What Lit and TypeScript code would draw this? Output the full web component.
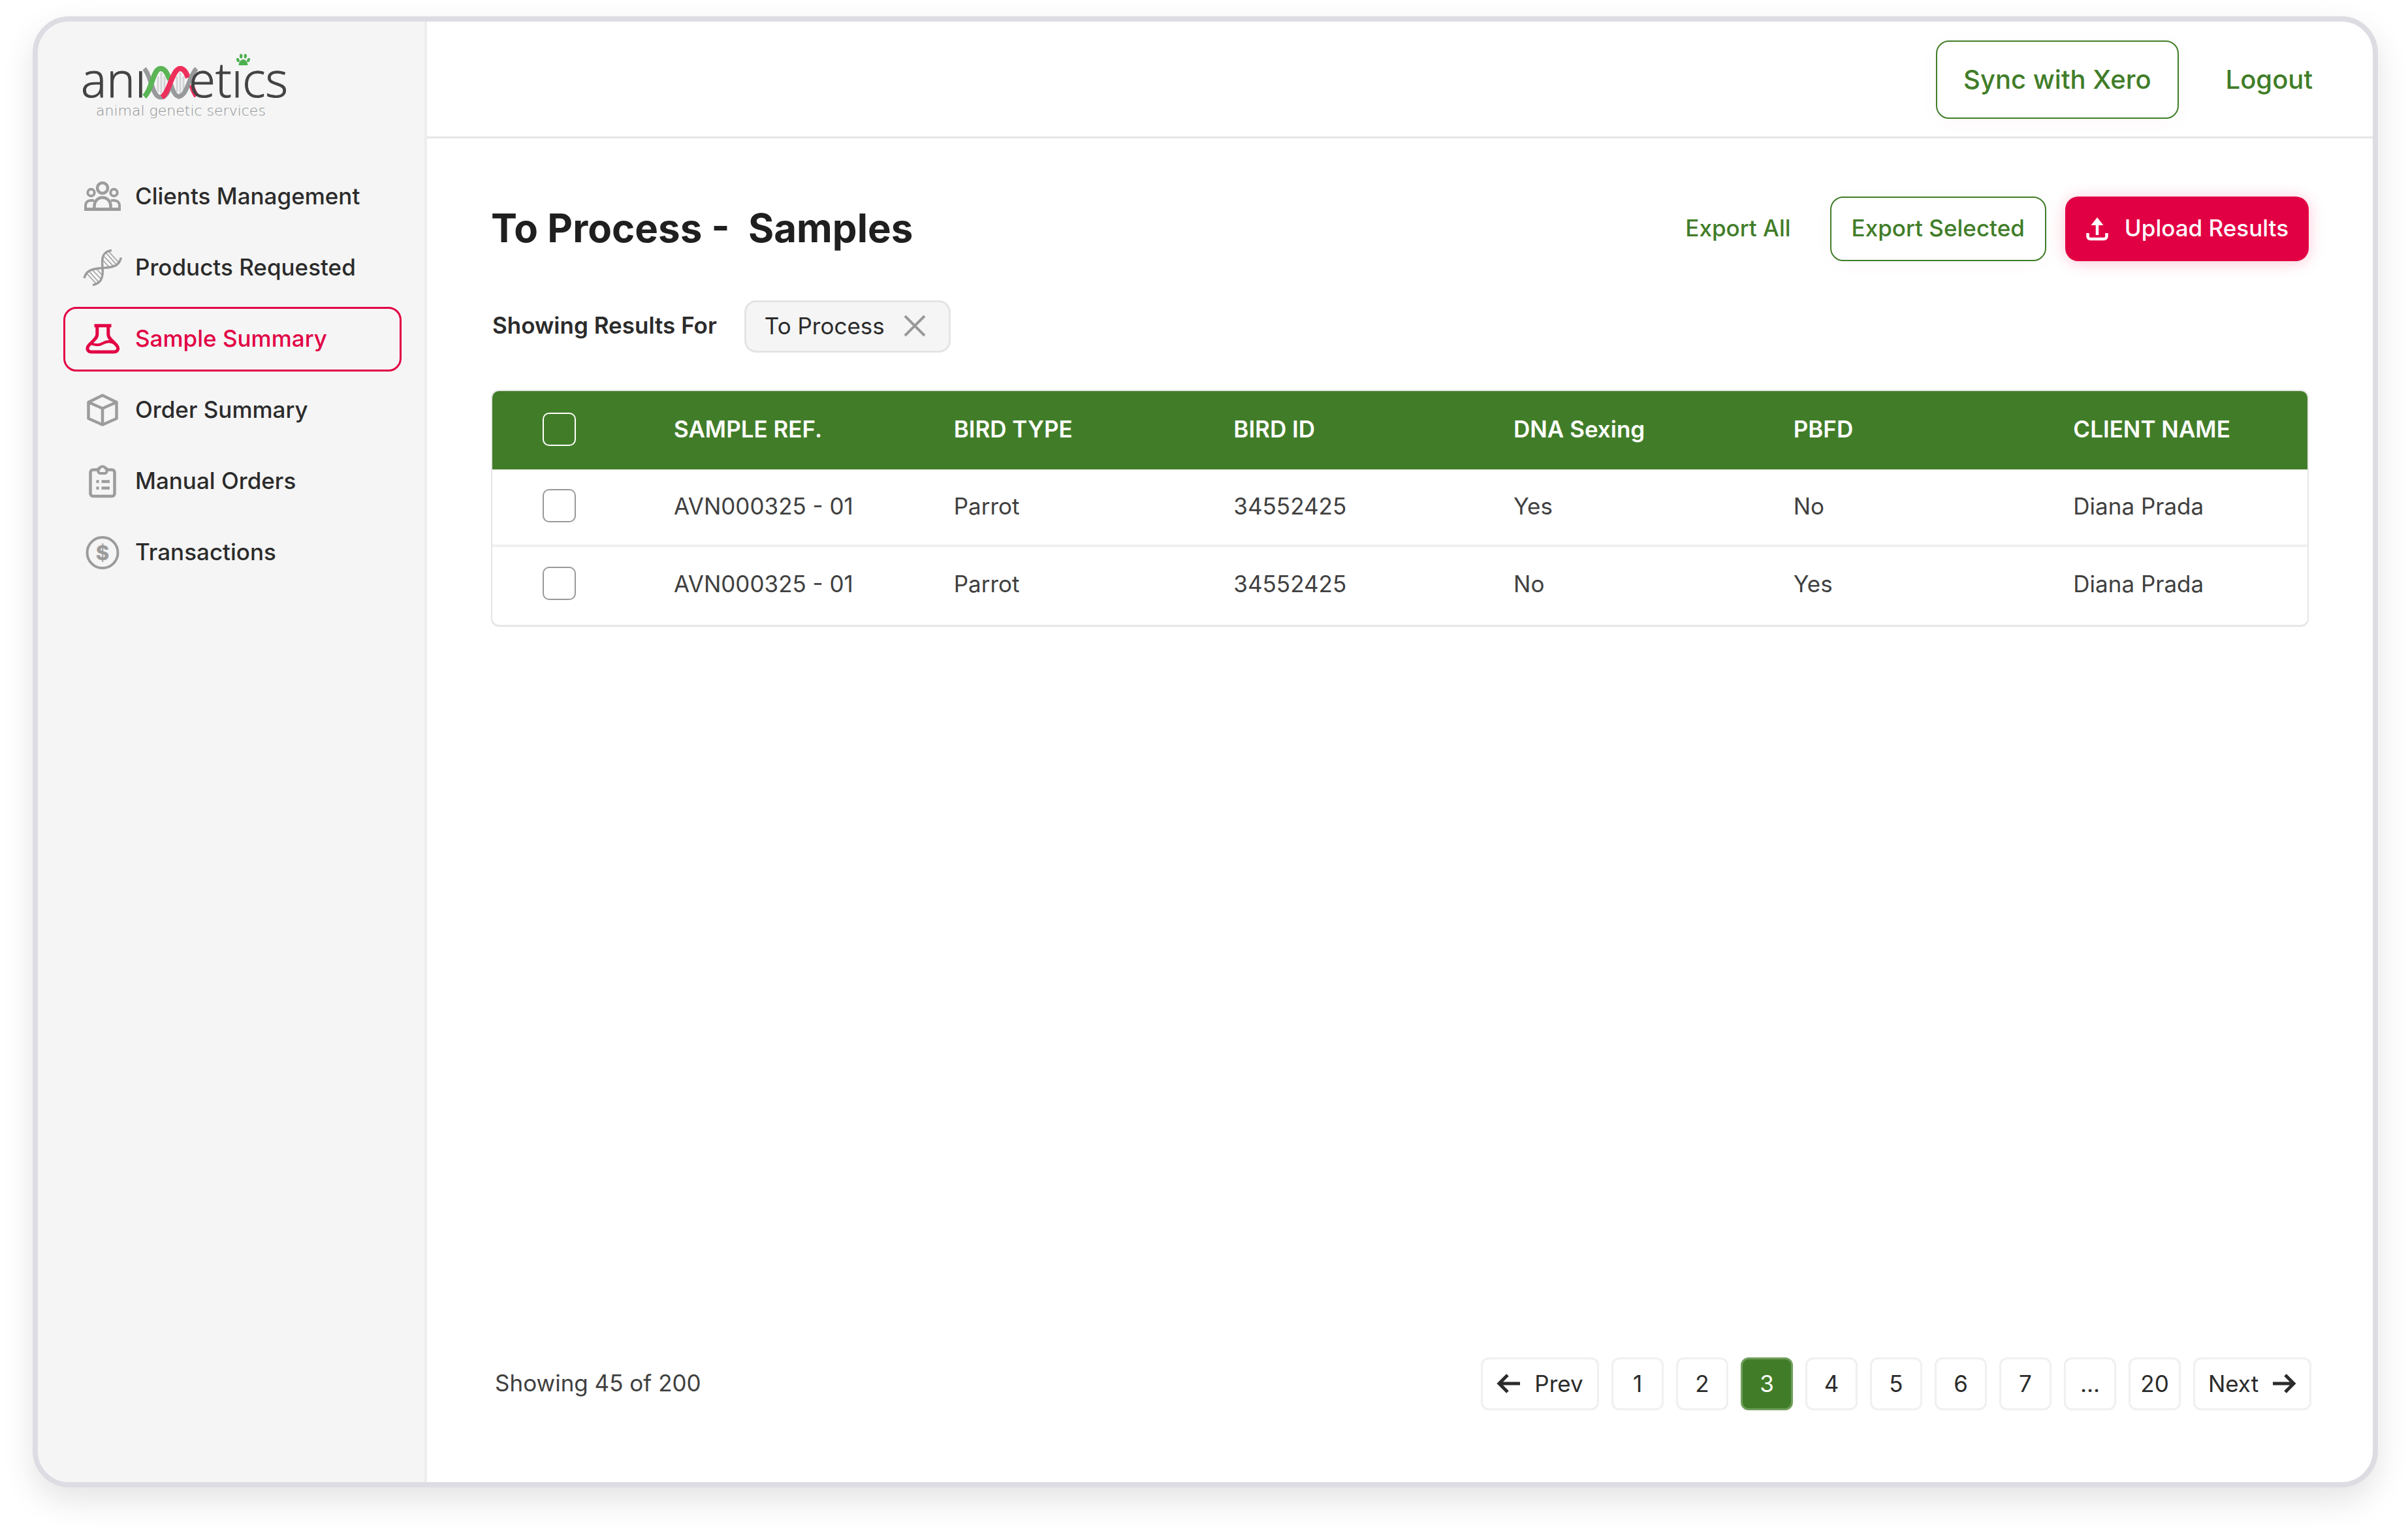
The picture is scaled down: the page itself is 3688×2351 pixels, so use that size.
import { LitElement, html, css, svg } from "lit";
import { customElement, property, state } from "lit/decorators.js";
import { classMap } from "lit/directives/class-map.js";

const icons: Record<string, unknown> = {
  people: svg`<g fill="none" stroke="currentColor" stroke-width="4.500">
    <circle cx="30" cy="17" r="8"/>
    <circle cx="12.5" cy="24" r="5.2" stroke-width="4"/>
    <circle cx="47.5" cy="24" r="5.2" stroke-width="4"/>
    <path d="M17.5 49V44a12.5 12.5 0 0 1 25 0v5"/>
    <path d="M4 49v-5c0-5 3-8 8-8h5M56 49v-5c0-5-3-8-8-8h-5" stroke-width="4"/>
    <path d="M2 49.500h56" stroke-width="5"/></g>`,
  dna: svg`<g fill="none" stroke="currentColor" stroke-width="3.500">
    <path d="M44 3.500C30 5 28.500 15 30 30C31.500 45 28 54.500 15 56.500"/>
    <path d="M58.500 14.500C55 28 46 29.500 30 30.500C14 31.500 5 34 2 46"/>
    <path stroke-width="1.500" d="M40 6L55 22M36 8L51 25M32.500 13L47 28M31 19L40 29M20 54L5 38M24 52L9 35M27.500 47L13 32M29 41L20 31"/></g>`,
  flask: svg`<g fill="none" stroke="currentColor" stroke-width="5" stroke-linejoin="round">
    <path d="M17.500 9.800h26" stroke-width="5"/>
    <path d="M21.800 11v12c0 4-2 6-5 9l-7 7c-5 5-3 11 3 11h35c6 0 8-6 3-11l-7-7c-3-3-5-5-5-9V11"/>
    <path d="M12 37c7 3 13 3 18 0s11-4 17-1" stroke-width="4"/></g>`,
  cube: svg`<path d="M30 7.500L51.500 18v25L30 52.500L8.500 43V18zM8.500 18L30 27.500L51.500 18M30 27.500v25" fill="none" stroke="currentColor" stroke-width="4.500" stroke-linejoin="round"/>`,
  clipboard: svg`<g fill="none" stroke="currentColor" stroke-width="4.500">
    <path d="M22 12.500h-6.500a4 4 0 0 0-4 4V49a4 4 0 0 0 4 4h29a4 4 0 0 0 4-4V16.500a4 4 0 0 0-4-4H38"/>
    <path d="M23.500 10.500h2c1-4 8-4 9 0h2V15a3 3 0 0 1-3 3h-7a3 3 0 0 1-3-3z" stroke-width="4" stroke-linejoin="round"/>
    <path d="M20.500 30.500h4M28.500 30.500h12.500M20.500 40.500h4M28.500 40.500h12.500"/></g>`,
  coin: svg`<circle cx="30" cy="30.500" r="23.500" fill="none" stroke="currentColor" stroke-width="4"/>
    <text x="30" y="41.500" text-anchor="middle" font-family="Inter, sans-serif" font-size="31" font-weight="800" fill="currentColor">$</text>`,
  upload: svg`<g fill="none" stroke="currentColor" stroke-width="4.500">
    <path d="M18 27V7" /><path d="M3.500 24v5a4 4 0 0 0 4 4h21a4 4 0 0 0 4-4v-5"/></g>
    <path d="M18 0l9.500 12h-19z" fill="currentColor"/>`,
  left: svg`<path d="M36 18H4M17 5L4 18l13 13" fill="none" stroke="currentColor" stroke-width="5"/>`,
  right: svg`<path d="M0 18h32M19 5l13 13-13 13" fill="none" stroke="currentColor" stroke-width="5"/>`,
  close: svg`<path d="M3 3l30 30M33 3L3 33" fill="none" stroke="currentColor" stroke-width="4"/>`,
};

@customElement("ui-icon")
class UiIcon extends LitElement {
  @property() name = "";
  @property({ type: Number }) box = 36;
  static styles = css`
    :host { display: block; flex: none; }
    svg { display: block; width: 100%; height: 100%; overflow: visible; }
  `;
  render() {
    return html`<svg viewBox="0 0 ${this.box} ${this.box}" aria-hidden="true">${icons[this.name]}</svg>`;
  }
}

@customElement("brand-logo")
class BrandLogo extends LitElement {
  static styles = css`
    :host { display: block; }
    svg { display: block; width: 324px; height: 112px; overflow: visible; }
    .word { font: 300 74px "Open Sans", sans-serif; fill: #434345; stroke: #434345; stroke-width: 1px; }
    .tag { font: 200 22px "DejaVu Sans", sans-serif; fill: #8d9091; }
  `;
  render() {
    return html`<svg viewBox="0 0 324 112" role="img" aria-label="animetics animal genetic services">
      <text class="word" x="4" y="74">anı</text>
      <g fill="none">
        <path d="M122 42v24M127 36v36M132 42v24M151 42v24M156 36v36M161 42v24M108 34v12M177 48v10" stroke="#d2d4d5" stroke-width="3"/>
        <path d="M101 30c11 12 12 44 25 44s14-20 16-26" stroke="#97999b" stroke-width="7"/>
        <path d="M101 73c12-10 13-43 25-43c7 0 10 8 14 17" stroke="#5bb556" stroke-width="8"/>
        <path d="M140 48c4 14 7 25 15 25" stroke="#97999b" stroke-width="7"/>
        <path d="M128 74c12-8 16-44 28-44c6 0 9 6 12 14M173 55c3 8 4 12 8 17" stroke="#ee2e5b" stroke-width="8"/>
        <path d="M153 73c14 0 16-32 28-43" stroke="#97999b" stroke-width="7"/>
      </g>
      <text class="word" x="321" y="74" text-anchor="end">etıcs</text>
      <g fill="#4cb04f">
        <ellipse cx="244.500" cy="17" rx="2.200" ry="3.400" transform="rotate(-25 244.500 17)"/>
        <ellipse cx="260.500" cy="17" rx="2.200" ry="3.400" transform="rotate(25 260.500 17)"/>
        <ellipse cx="249.200" cy="11" rx="2.200" ry="3.400"/><ellipse cx="255.800" cy="11" rx="2.200" ry="3.400"/>
        <path d="M252.500 16c4 0 7 5 7 9h-14c0-4 3-9 7-9z"/>
      </g>
      <text class="tag" x="27" y="102">animal genetic services</text>
    </svg>`;
  }
}

const NAV = [
  ["people", "Clients Management"],
  ["dna", "Products Requested"],
  ["flask", "Sample Summary"],
  ["cube", "Order Summary"],
  ["clipboard", "Manual Orders"],
  ["coin", "Transactions"],
];
const COLUMNS = ["SAMPLE REF.", "BIRD TYPE", "BIRD ID", "DNA Sexing", "PBFD", "CLIENT NAME"];
const ROWS = [
  ["AVN000325 - 01", "Parrot", "34552425", "Yes", "No", "Diana Prada"],
  ["AVN000325 - 01", "Parrot", "34552425", "No", "Yes", "Diana Prada"],
];
const PAGES = ["1", "2", "3", "4", "5", "6", "7", "...", "20"];

@customElement("app-root")
class AppRoot extends LitElement {
  @state() private section = "Sample Summary";
  @state() private page = "3";

  static styles = css`
    :host {
      display: block;
      --green: #417d29;
      --red: #e20044;
      --line: #e6e6e6;
      --soft: #f0f0f0;
      font-family: Inter, sans-serif;
      font-size: 35px;
      line-height: 40px;
      color: #2b2b2b;
    }
    * { box-sizing: border-box; }
    button { font: inherit; color: inherit; background: none; border: 0; padding: 0; cursor: pointer; }
    a { color: inherit; text-decoration: none; }
    .page { display: flex; min-height: 100vh; padding: 25px 46px 73px 50px; background: #fff; }
    .card {
      flex: 1; display: flex; overflow: hidden; background: #fff;
      border: 8px solid #dedce3; border-radius: 56px;
      box-shadow: 0 20px 50px rgba(0, 0, 0, 0.11);
    }
    .sidebar { flex: none; width: 596px; padding: 42px 35px 40px 39px; background: #f5f5f5; border-right: 4px solid #ededed; }
    .logo { padding-left: 23px; height: 177px; }
    .nav { display: flex; flex-direction: column; gap: 10px; }
    .nav-item {
      display: flex; align-items: center; gap: 20px; height: 99px; padding: 0 27px 4px;
      border: 3px solid transparent; border-radius: 20px; font-weight: 500;
    }
    .nav-icon { width: 60px; height: 60px; margin-top: 2px; color: #9c9c9c; }
    .nav-item.active { border-color: var(--red); color: var(--red); }
    .nav-item.active .nav-icon { color: var(--red); }
    .main { flex: 1; min-width: 0; display: flex; flex-direction: column; }
    .topbar {
      display: flex; justify-content: flex-end; align-items: center; gap: 72px;
      padding: 29px 92px 27px; border-bottom: 3px solid var(--line);
      font-size: 40px; font-weight: 500; color: var(--green);
    }
    .outline { border: 2px solid var(--green); border-radius: 20px; color: var(--green); font-weight: 500; }
    .sync { height: 120px; padding: 0 40px; box-shadow: 0 4px 30px rgba(226, 0, 68, 0.03); }
    .content { flex: 1; display: flex; flex-direction: column; padding: 89px 98px 110px; }
    .toolbar { display: flex; align-items: center; }
    .title { margin: 0 auto 0 0; padding-bottom: 4px; font-size: 60px; line-height: 70px; font-weight: 700; color: #1f1f1f; white-space: pre; }
    .actions { display: flex; align-items: center; }
    .export-all { margin-right: 60px; padding-bottom: 4px; color: var(--green); font-weight: 500; }
    .export { height: 99px; padding: 0 31px 4px; margin-right: 29px; box-shadow: 0 4px 30px rgba(226, 0, 68, 0.03); }
    .upload {
      display: flex; align-items: center; gap: 24px; height: 99px; padding: 0 31px 4px;
      border-radius: 20px; background: var(--red); color: #fff; font-weight: 500;
      box-shadow: 0 2px 24px rgba(226, 0, 68, 0.22);
    }
    .glyph { width: 36px; height: 36px; }
    .upload .glyph { margin-top: 4px; }
    .filters { display: flex; align-items: center; gap: 40px; margin-top: 60px; }
    .filter-label { padding: 0 2px 4px; font-weight: 600; }
    .chip {
      display: flex; align-items: center; gap: 28px; height: 80px; padding: 0 34px 2px 28px;
      background: #f5f5f5; border: 3px solid #e4e4e4; border-radius: 18px;
    }
    .chip .glyph { color: #999; }
    .table {
      width: 100%; margin-top: 57px; table-layout: fixed; border-collapse: separate; border-spacing: 0;
      border: 2px solid var(--line); border-bottom-width: 3px; border-radius: 12px; overflow: hidden;
    }
    .table th, .table td { height: 119px; padding: 0 0 4px; text-align: left; }
    .table th { width: 15.42%; height: 120px; background: var(--green); color: #fff; font-weight: 600; }
    .table th.pick { width: 10%; }
    .table th:last-child { width: auto; }
    .table td { color: #404040; border-bottom: 4px solid var(--soft); }
    .table tr:last-child td { border-bottom-color: transparent; }
    .check {
      display: block; appearance: none; width: 51px; height: 51px; margin: 0 0 0 77px;
      border: 2px solid #999; border-radius: 10px; background: #fff;
    }
    th .check { border-color: #fff; background: transparent; }
    .footer { display: flex; align-items: center; justify-content: space-between; margin: auto -4px 0 4px; }
    .pages { display: flex; gap: 19px; }
    .page-btn {
      min-width: 80px; height: 81px; padding-bottom: 2px; border: 3px solid var(--soft); border-radius: 12px;
      display: flex; align-items: center; justify-content: center; gap: 22px;
    }
    .page-btn.wide { width: 181px; }
    .page-btn.active { background: var(--green); border-color: #6f9e5c; color: #fff; }
    .count { padding: 0 2px 4px; color: #404040; }
  `;

  render() {
    return html`<div class="page"><div class="card">
      <aside class="sidebar">
        <div class="logo"><brand-logo></brand-logo></div>
        <nav class="nav" aria-label="Main">
          ${NAV.map(([icon, label]) => html`<a href="#"
            class=${classMap({ "nav-item": true, active: label === this.section })}
            @click=${(e: Event) => { e.preventDefault(); this.section = label; }}
            ><ui-icon class="nav-icon" name=${icon} box="60"></ui-icon><span>${label}</span></a>`)}
        </nav>
      </aside>
      <main class="main">
        <header class="topbar">
          <button class="outline sync">Sync with Xero</button>
          <a href="#">Logout</a>
        </header>
        <section class="content">
          <div class="toolbar">
            <h1 class="title">To Process -  Samples</h1>
            <div class="actions">
              <button class="export-all">Export All</button>
              <button class="outline export">Export Selected</button>
              <button class="upload"><ui-icon class="glyph" name="upload"></ui-icon>Upload Results</button>
            </div>
          </div>
          <div class="filters">
            <span class="filter-label">Showing Results For</span>
            <div class="chip">To Process<button aria-label="Remove filter"><ui-icon class="glyph" name="close"></ui-icon></button></div>
          </div>
          <table class="table">
            <thead><tr>
              <th class="pick"><input class="check" type="checkbox" aria-label="Select all samples"></th>
              ${COLUMNS.map((c) => html`<th scope="col">${c}</th>`)}
            </tr></thead>
            <tbody>
              ${ROWS.map((row, i) => html`<tr>
                <td><input class="check" type="checkbox" aria-label="Select row ${i + 1}"></td>
                ${row.map((cell) => html`<td>${cell}</td>`)}
              </tr>`)}
            </tbody>
          </table>
          <footer class="footer">
            <span class="count">Showing 45 of 200</span>
            <nav class="pages" aria-label="Pagination">
              <button class="page-btn wide"><ui-icon class="glyph" name="left"></ui-icon>Prev</button>
              ${PAGES.map((p) => html`<button
                class=${classMap({ "page-btn": true, active: p === this.page })}
                @click=${() => { this.page = p; }}>${p}</button>`)}
              <button class="page-btn wide">Next<ui-icon class="glyph" name="right"></ui-icon></button>
            </nav>
          </footer>
        </section>
      </main>
    </div></div>`;
  }
}
